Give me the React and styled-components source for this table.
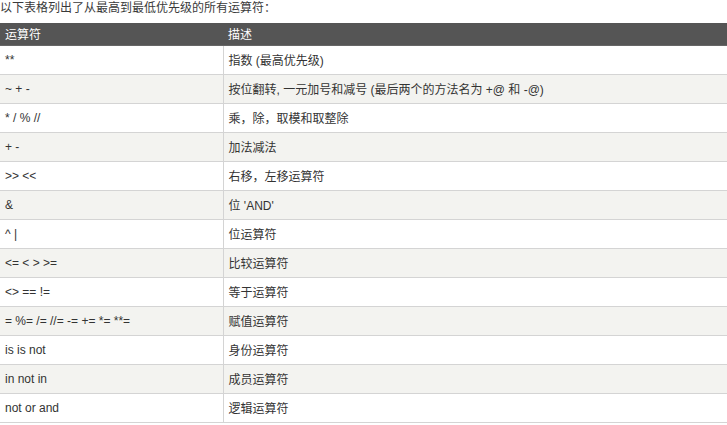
import React from 'react'
import styled, { createGlobalStyle } from 'styled-components'

const GlobalStyle = createGlobalStyle`
  html, body {
    margin: 0;
    padding: 0;
    background: #fff;
  }
  body {
    font-family: "Liberation Sans", "Noto Sans CJK SC", sans-serif;
    color: #333;
  }
`

const rows = [
  ['**', '指数 (最高优先级)'],
  ['~ + -', '按位翻转, 一元加号和减号 (最后两个的方法名为 +@ 和 -@)'],
  ['* / % //', '乘，除，取模和取整除'],
  ['+ -', '加法减法'],
  ['>> <<', '右移，左移运算符'],
  ['&', "位 'AND'"],
  ['^ |', '位运算符'],
  ['<= < > >=', '比较运算符'],
  ['<> == !=', '等于运算符'],
  ['= %= /= //= -= += *= **=', '赋值运算符'],
  ['is is not', '身份运算符'],
  ['in not in', '成员运算符'],
  ['not or and', '逻辑运算符'],
]

const Page = styled.div`
  width: 727px;
`

const Intro = styled.p`
  margin: 0;
  height: 23px;
  font-size: 12px;
  line-height: 17px;
  color: #3a3a3a;
`

const Table = styled.table`
  width: 100%;
  border-collapse: collapse;
  font-size: 12px;
`

const HeadCell = styled.th`
  background: #555;
  color: #fff;
  font-weight: normal;
  text-align: left;
  height: 22px;
  padding: 0 5px;
  border-bottom: 1px solid #666;
  box-sizing: border-box;
  width: ${({ w }) => w || 'auto'};
`

const Row = styled.tr`
  background: ${({ alt }) => (alt ? '#f3f3f0' : '#fff')};
  border-bottom: 1px solid #d4d4d4;
`

const Cell = styled.td`
  height: 28px;
  padding: 0 5px;
  color: #333;
  vertical-align: middle;

  & + & {
    border-left: 1px solid #d4d4d4;
  }
`

export default function App() {
  return (
    <Page>
      <GlobalStyle />
      <Intro>以下表格列出了从最高到最低优先级的所有运算符：</Intro>
      <Table>
        <thead>
          <tr>
            <HeadCell w="223px">运算符</HeadCell>
            <HeadCell>描述</HeadCell>
          </tr>
        </thead>
        <tbody>
          {rows.map(([op, desc], i) => (
            <Row key={op} alt={i % 2 === 1}>
              <Cell>{op}</Cell>
              <Cell>{desc}</Cell>
            </Row>
          ))}
        </tbody>
      </Table>
    </Page>
  )
}
